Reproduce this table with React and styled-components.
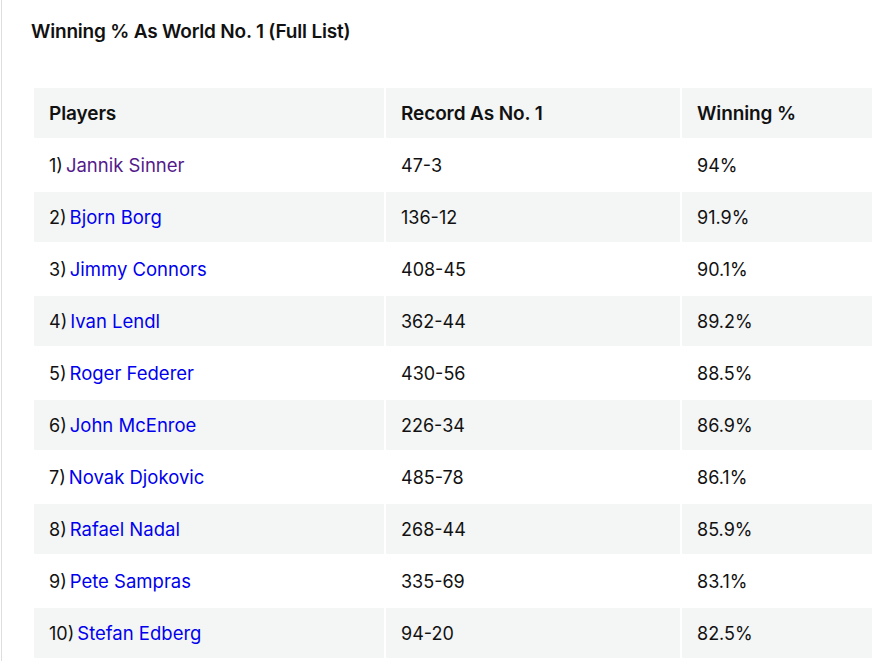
import React from "react";
import styled, { createGlobalStyle } from "styled-components";

const Global = createGlobalStyle`
  html, body { margin: 0; padding: 0; background: #fff; overflow: hidden; }
  body { font-family: Inter, "Liberation Sans", Arial, sans-serif; color: #111; }
`;

const Page = styled.div`
  margin-left: 1px;
  border-left: 1px solid #dedede;
  min-height: 661px;
  padding: 19px 0 0 29px;
  box-sizing: border-box;
`;

const Title = styled.h2`
  margin: 0 0 43px;
  font-size: 19px;
  line-height: 26px;
  font-weight: 600;
  color: #111;
  letter-spacing: -0.2px;
`;

const Table = styled.table`
  border-collapse: separate;
  border-spacing: 2px;
  margin: -2px 0 0 1px;
  table-layout: fixed;
  width: 900px;
`;

const Th = styled.th`
  background: #f4f5f5;
  height: 50px;
  padding: 0 15px;
  text-align: left;
  font-size: 19px;
  font-weight: 600;
  color: #111;
  letter-spacing: -0.1px;
  width: ${(p) => p.$w}px;
  box-sizing: border-box;
`;

const Td = styled.td`
  background: ${(p) => (p.$shade ? "#f4f5f5" : "#fff")};
  height: 50px;
  padding: 0 15px;
  font-size: 18px;
  font-weight: 400;
  color: #111;
  letter-spacing: 0;
`;

const Rank = styled.span`
  margin-right: 3px;
`;

const Link = styled.a`
  color: ${(p) => (p.$visited ? "#551a8b" : "#0000ee")};
  text-decoration: none;
  font-size: 18.5px;
`;

const rows = [
  ["Jannik Sinner", "47-3", "94%", true],
  ["Bjorn Borg", "136-12", "91.9%"],
  ["Jimmy Connors", "408-45", "90.1%"],
  ["Ivan Lendl", "362-44", "89.2%"],
  ["Roger Federer", "430-56", "88.5%"],
  ["John McEnroe", "226-34", "86.9%"],
  ["Novak Djokovic", "485-78", "86.1%"],
  ["Rafael Nadal", "268-44", "85.9%"],
  ["Pete Sampras", "335-69", "83.1%"],
  ["Stefan Edberg", "94-20", "82.5%"],
];

export default function App() {
  return (
    <>
      <Global />
      <Page>
        <Title>Winning % As World No. 1 (Full List)</Title>
        <Table>
          <thead>
            <tr>
              <Th $w={350}>Players</Th>
              <Th $w={294}>Record As No. 1</Th>
              <Th $w={250}>Winning %</Th>
            </tr>
          </thead>
          <tbody>
            {rows.map(([name, rec, pct, visited], i) => (
              <tr key={name}>
                <Td $shade={i % 2 === 1}>
                  <Rank>{i + 1})</Rank>
                  <Link href="#" $visited={visited}>
                    {name}
                  </Link>
                </Td>
                <Td $shade={i % 2 === 1}>{rec}</Td>
                <Td $shade={i % 2 === 1}>{pct}</Td>
              </tr>
            ))}
          </tbody>
        </Table>
      </Page>
    </>
  );
}
